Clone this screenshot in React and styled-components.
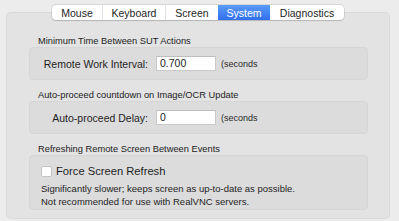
import React from "react";
import styled, { createGlobalStyle } from "styled-components";

const GlobalStyle = createGlobalStyle`
  html, body {
    margin: 0;
    padding: 0;
    background: #ececec;
  }
  body {
    font-family: "Liberation Sans", Arial, sans-serif;
    color: #262626;
  }
`;

const Page = styled.div`
  width: 399px;
  height: 221px;
  padding: 5px 0 0 6px;
  box-sizing: border-box;
  overflow: hidden;
`;

const Window = styled.div`
  width: 384px;
  display: flex;
  flex-direction: column;
  align-items: center;
`;

const TabBar = styled.div`
  position: relative;
  z-index: 1;
  display: flex;
  height: 15px;
  background: #fff;
  border-radius: 4px;
  box-shadow: 0 0 0 0.5px rgba(0, 0, 0, 0.18), 0 1px 1px rgba(0, 0, 0, 0.12);
  overflow: hidden;
`;

const Tab = styled.div`
  width: ${(p) => p.w}px;
  display: flex;
  align-items: center;
  justify-content: center;
  font-size: 10.5px;
  color: ${(p) => (p.active ? "#fff" : "#1e1e1e")};
  background: ${(p) =>
    p.active ? "linear-gradient(#5b9bf8, #2f6fec)" : "transparent"};
  border-left: ${(p) => (p.first ? "none" : "1px solid #e2e2e2")};
`;

const Panel = styled.div`
  margin-top: -8px;
  width: 100%;
  box-sizing: border-box;
  background: #e3e3e3;
  border-radius: 5px;
  border: 1px solid #dadada;
  padding: 23px 21px 8px 22px;
  display: flex;
  flex-direction: column;
`;

const SectionTitle = styled.div`
  font-size: 9.3px;
  line-height: 11px;
  height: 11px;
  padding-left: 9px;
  margin-top: ${(p) => (p.first ? 0 : 10)}px;
  color: #222;
`;

const Group = styled.div`
  width: 339px;
  height: ${(p) => p.h}px;
  box-sizing: border-box;
  background: #dcdcdc;
  border-radius: 4px;
  border: 1px solid #d6d6d6;
`;

const FieldRow = styled.div`
  height: 100%;
  display: flex;
  align-items: center;
`;

const Label = styled.div`
  width: 118px;
  text-align: right;
  font-size: 10.5px;
  color: #1e1e1e;
`;

const Input = styled.div`
  margin-left: 8px;
  width: 60px;
  height: 15px;
  box-sizing: border-box;
  background: #fff;
  border: 1px solid #c9c9c9;
  border-top-color: #bdbdbd;
  font-size: 10.5px;
  line-height: 13px;
  padding-left: 3px;
  color: #1e1e1e;
`;

const Unit = styled.div`
  margin-left: 5px;
  font-size: 9px;
  color: #2a2a2a;
`;

const CheckRow = styled.div`
  display: flex;
  align-items: center;
  padding: 9px 0 0 11px;
`;

const Checkbox = styled.div`
  width: 11px;
  height: 11px;
  box-sizing: border-box;
  background: #fff;
  border: 1px solid #c4c4c4;
  border-radius: 2px;
`;

const CheckLabel = styled.div`
  margin-left: 4px;
  font-size: 11.2px;
  color: #1e1e1e;
`;

const Note = styled.div`
  padding: 5px 0 0 11px;
  font-size: 9.5px;
  line-height: 13px;
  color: #1e1e1e;
`;

const tabs = [
  { name: "Mouse", w: 50 },
  { name: "Keyboard", w: 62 },
  { name: "Screen", w: 52 },
  { name: "System", w: 52, active: true },
  { name: "Diagnostics", w: 74 },
];

export default function App() {
  return (
    <>
      <GlobalStyle />
      <Page>
        <Window>
          <TabBar>
            {tabs.map((t, i) => (
              <Tab key={t.name} w={t.w} active={t.active} first={i === 0 || t.active || tabs[i - 1].active}>
                {t.name}
              </Tab>
            ))}
          </TabBar>
          <Panel>
            <SectionTitle first>Minimum Time Between SUT Actions</SectionTitle>
            <Group h={33}>
              <FieldRow>
                <Label>Remote Work Interval:</Label>
                <Input>0.700</Input>
                <Unit>(seconds</Unit>
              </FieldRow>
            </Group>
            <SectionTitle>Auto-proceed countdown on Image/OCR Update</SectionTitle>
            <Group h={33}>
              <FieldRow>
                <Label>Auto-proceed Delay:</Label>
                <Input>0</Input>
                <Unit>(seconds</Unit>
              </FieldRow>
            </Group>
            <SectionTitle>Refreshing Remote Screen Between Events</SectionTitle>
            <Group h={55}>
              <CheckRow>
                <Checkbox />
                <CheckLabel>Force Screen Refresh</CheckLabel>
              </CheckRow>
              <Note>
                Significantly slower; keeps screen as up-to-date as possible.
                <br />
                Not recommended for use with RealVNC servers.
              </Note>
            </Group>
          </Panel>
        </Window>
      </Page>
    </>
  );
}
